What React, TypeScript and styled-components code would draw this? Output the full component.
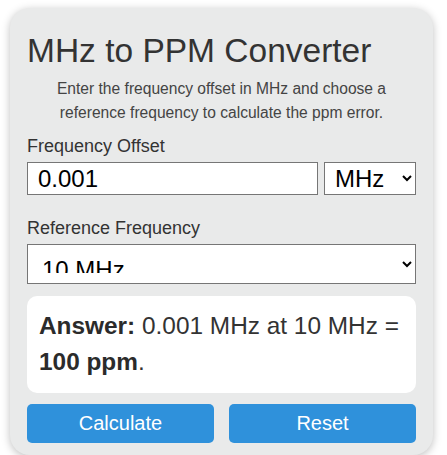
import React, { useState } from "react";
import styled, { createGlobalStyle } from "styled-components";

const GlobalStyle = createGlobalStyle`
  body {
    margin: 0;
    background: #ffffff;
    font-family: "Liberation Sans", Arial, sans-serif;
  }
`;

const Page = styled.div`
  padding: 8px 14px 0 10px;
`;

const Card = styled.div`
  background-color: #e9eaea;
  border-radius: 20px;
  box-shadow: 0 2px 8px rgba(0, 0, 0, 0.25);
  padding: 24px 17px 12px;
  color: #333;
`;

const Title = styled.h1`
  margin: 0;
  font-size: 33.5px;
  font-weight: 400;
  line-height: 38px;
  color: #333;
`;

const Description = styled.p`
  margin: 7px 0 0;
  font-size: 15.6px;
  line-height: 24px;
  text-align: center;
  color: #444;
`;

const Label = styled.label<{ $top: number }>`
  display: block;
  font-size: 18px;
  line-height: 18px;
  color: #333;
  margin-top: ${(p) => p.$top}px;
`;

const Row = styled.div`
  display: flex;
  gap: 6px;
  margin-top: 7px;
`;

const NumberInput = styled.input`
  flex: 1;
  min-width: 0;
  height: 33px;
  box-sizing: border-box;
  border: 1px solid #767676;
  padding: 2px 10px;
  font-family: "Liberation Sans", Arial, sans-serif;
  font-size: 24px;
  color: #000;
  background: #fff;
  outline: none;
`;

const UnitSelect = styled.select`
  width: 92px;
  height: 33px;
  box-sizing: border-box;
  border: 1px solid #767676;
  border-radius: 0;
  padding: 0 4px 0 6px;
  font-family: "Liberation Sans", Arial, sans-serif;
  font-size: 24px;
  color: #000;
  background: #fff;
`;

const RefSelect = styled.select`
  display: block;
  width: 100%;
  height: 40px;
  margin-top: 7px;
  box-sizing: border-box;
  border: 1px solid #767676;
  border-radius: 0;
  padding: 10px;
  font-family: "Liberation Sans", Arial, sans-serif;
  font-size: 24px;
  color: #000;
  background: #fff;
`;

const AnswerBox = styled.div`
  margin-top: 12px;
  background: #fff;
  border-radius: 10px;
  padding: 12px 12px 13px;
  font-size: 24.4px;
  line-height: 36px;
  color: #333;

  strong {
    color: #2b2b2b;
  }
`;

const Buttons = styled.div`
  display: grid;
  grid-template-columns: 1fr 1fr;
  gap: 15px;
  margin-top: 11px;
`;

const Button = styled.button`
  height: 39px;
  border: none;
  border-radius: 5px;
  background: #2f91db;
  color: #fff;
  font-family: "Liberation Sans", Arial, sans-serif;
  font-size: 20px;
  cursor: pointer;
`;

const App = () => {
  const [offset, setOffset] = useState("0.001");
  const [unit, setUnit] = useState("MHz");
  const [ref, setRef] = useState("10");

  return (
    <Page>
      <GlobalStyle />
      <Card>
        <Title>MHz to PPM Converter</Title>
        <Description>
          Enter the frequency offset in MHz and choose a reference frequency to
          calculate the ppm error.
        </Description>
        <Label $top={12}>Frequency Offset</Label>
        <Row>
          <NumberInput value={offset} onChange={(e) => setOffset(e.target.value)} />
          <UnitSelect value={unit} onChange={(e) => setUnit(e.target.value)}>
            <option value="MHz">MHz</option>
            <option value="kHz">kHz</option>
            <option value="Hz">Hz</option>
          </UnitSelect>
        </Row>
        <Label $top={24}>Reference Frequency</Label>
        <RefSelect value={ref} onChange={(e) => setRef(e.target.value)}>
          <option value="10">10 MHz</option>
          <option value="100">100 MHz</option>
          <option value="1000">1000 MHz</option>
        </RefSelect>
        <AnswerBox>
          <strong>Answer:</strong> 0.001 MHz at 10 MHz = <strong>100 ppm</strong>.
        </AnswerBox>
        <Buttons>
          <Button>Calculate</Button>
          <Button>Reset</Button>
        </Buttons>
      </Card>
    </Page>
  );
};

export default App;
